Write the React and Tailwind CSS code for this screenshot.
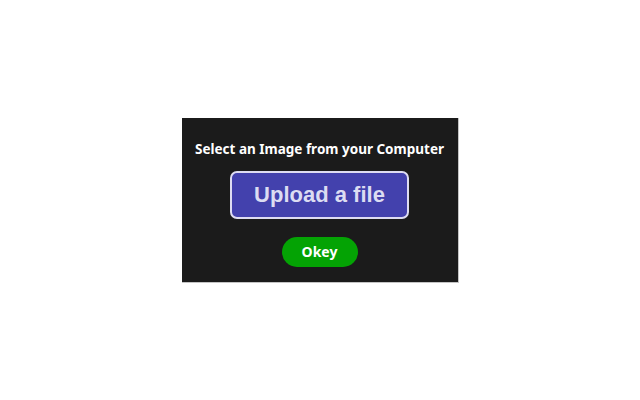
import React from 'react';

export default function App() {
  return (
    <div className="min-h-screen bg-white flex items-center justify-center">
      <div className="w-[277px] h-[165px] bg-[#1b1b1b] border-r border-b border-[#c4c4c4] flex flex-col items-center pt-[22px]">
        <p className="text-[13.5px] leading-[18px] font-bold text-white font-['Noto_Sans',sans-serif]">
          Select an Image from your Computer
        </p>
        <button className="mt-[13px] w-[179px] h-[48px] rounded-[7px] border-2 border-[#dedcf2] bg-[#4341ad] text-[#dcdcf2] text-[22px] font-bold font-['Liberation_Sans',Arial,sans-serif]">
          Upload a file
        </button>
        <button className="mt-[18px] w-[76px] h-[30px] rounded-full bg-[#04a304] text-white text-[14px] font-bold font-['Noto_Sans',sans-serif]">
          Okey
        </button>
      </div>
    </div>
  );
}
